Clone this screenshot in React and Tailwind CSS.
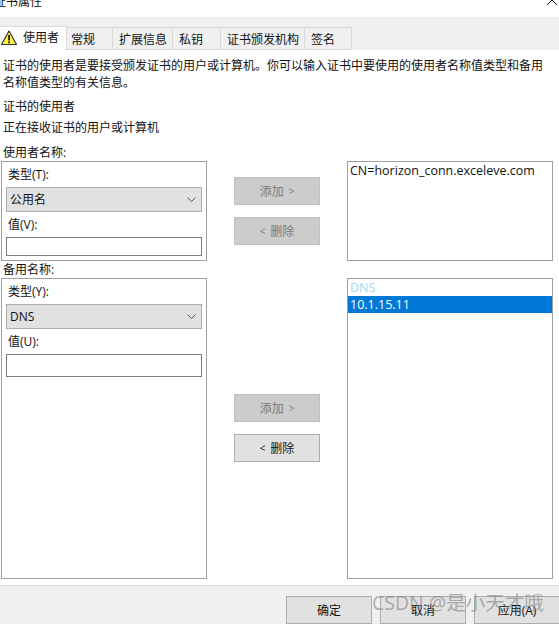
import React from "react";

function Chevron() {
  return (
    <svg width="9" height="5" viewBox="0 0 9 5" className="shrink-0">
      <path d="M0.5 0.5 L4.5 4.5 L8.5 0.5" fill="none" stroke="#555" strokeWidth="1" />
    </svg>
  );
}

function Warning() {
  return (
    <svg width="16" height="15" viewBox="0 0 16 15" className="shrink-0">
      <path d="M8 1 L15.5 14.5 H0.5 Z" fill="#fdf04a" stroke="#333" strokeWidth="1.2" strokeLinejoin="round" />
      <rect x="7.2" y="5" width="1.7" height="5.5" fill="#111" />
      <rect x="7.2" y="11.5" width="1.7" height="1.7" fill="#111" />
    </svg>
  );
}

function Tab({ w, pl, children }) {
  return (
    <div className={`${w} ${pl} h-[22px] flex items-center pt-[1px] border-t border-r border-[#d9d9d9] bg-[#f0f0f0] text-[#111]`}>
      {children}
    </div>
  );
}

function Btn({ disabled, children }) {
  return (
    <div
      className={`w-[86px] h-[28px] shrink-0 flex items-center justify-center gap-[5px] border ${
        disabled ? "bg-[#cccccc] border-[#bfbfbf] text-[#7a7a7a]" : "bg-[#e1e1e1] border-[#adadad] text-[#111]"
      }`}
    >
      {children}
    </div>
  );
}

function Group({ h, typeLabel, selected, valueLabel, inputH }) {
  return (
    <div className={`w-[206px] ${h} shrink-0 border border-[#a0a0a0] px-[4px] bg-white`}>
      <div className="h-[25px] pl-[2px] flex items-center">{typeLabel}</div>
      <div className="h-[25px] bg-[#e1e1e1] border border-[#adadad] flex items-center justify-between pl-[3px] pr-[5px]">
        <span>{selected}</span>
        <Chevron />
      </div>
      <div className="h-[25px] pl-[2px] flex items-center">{valueLabel}</div>
      <div className={`${inputH} border border-[#7a7a7a] bg-white`} />
    </div>
  );
}

export default function App() {
  return (
    <div
      className="relative w-[559px] h-[624px] overflow-hidden flex flex-col bg-white text-[12px] leading-[17px] text-[#111]"
      style={{ fontFamily: '"Open Sans", "Noto Sans CJK SC", sans-serif' }}
    >
      {/* title bar */}
      <div className="h-[17px] shrink-0 bg-white flex justify-between overflow-hidden">
        <div className="-mt-[7px] -ml-[6px] text-[12px] leading-[17px]">证书属性</div>
        <svg width="12" height="12" viewBox="0 0 12 12" className="-mt-[6px] mr-[1px]">
          <path d="M1 1 L11 11 M11 1 L1 11" stroke="#111" strokeWidth="1" fill="none" />
        </svg>
      </div>

      {/* tabs */}
      <div className="h-[33px] shrink-0 bg-[#f0f0f0] flex items-end">
        <div className="w-[67px] h-[24px] flex items-center gap-[6px] pl-[1px] pb-[2px] bg-white border-t border-r border-[#d9d9d9]">
          <Warning />
          <span>使用者</span>
        </div>
        <div className="flex items-end border-b border-[#d9d9d9]">
          <Tab w="w-[46px]" pl="pl-[4px]">常规</Tab>
          <Tab w="w-[60px]" pl="pl-[6px]">扩展信息</Tab>
          <Tab w="w-[48px]" pl="pl-[6px]">私钥</Tab>
          <Tab w="w-[84px]" pl="pl-[6px]">证书颁发机构</Tab>
          <Tab w="w-[47px]" pl="pl-[6px]">签名</Tab>
        </div>
      </div>

      {/* body */}
      <div className="flex-1 min-h-0 bg-white flex flex-col pl-[1px] pt-[7px]">
        <div className="pl-[2px] w-[556px]">
          <p className="whitespace-nowrap">证书的使用者是要接受颁发证书的用户或计算机。你可以输入证书中要使用的使用者名称值类型和备用</p>
          <p className="whitespace-nowrap">名称值类型的有关信息。</p>
          <p className="mt-[7px] leading-[17px]">证书的使用者</p>
          <p className="mt-[4px]">正在接收证书的用户或计算机</p>
          <p className="mt-[8px] h-[17px]">使用者名称:</p>
        </div>

        <div className="flex h-[100px]">
          <Group h="h-[100px]" typeLabel="类型(T):" selected="公用名" valueLabel="值(V):" inputH="h-[19px]" />
          <div className="ml-[27px] w-[86px] pt-[16px] flex flex-col gap-[12px]">
            <Btn disabled><span>添加</span><span className="text-[10px]">&gt;</span></Btn>
            <Btn disabled><span className="text-[10px]">&lt;</span><span>删除</span></Btn>
          </div>
          <div className="ml-[27px] w-[206px] border border-[#a0a0a0] px-[2px] text-[12.5px] leading-[17px] whitespace-nowrap">
            CN=horizon_conn.exceleve.com
          </div>
        </div>

        <p className="pl-[2px] h-[17px]">备用名称:</p>

        <div className="flex h-[301px]">
          <Group h="h-[301px]" typeLabel="类型(Y):" selected="DNS" valueLabel="值(U):" inputH="h-[23px]" />
          <div className="ml-[27px] w-[86px] pt-[116px] flex flex-col gap-[12px]">
            <Btn disabled><span>添加</span><span className="text-[10px]">&gt;</span></Btn>
            <Btn><span className="text-[10px]">&lt;</span><span>删除</span></Btn>
          </div>
          <div className="ml-[27px] w-[206px] border border-[#a0a0a0] text-[12.5px] leading-[17px] whitespace-nowrap">
            <div className="h-[17px] px-[2px] text-[#a6d8f0]">DNS</div>
            <div className="h-[17px] px-[2px] bg-[#0078d7] text-white">10.1.15.11</div>
          </div>
        </div>
      </div>

      {/* footer */}
      <div className="h-[39px] shrink-0 bg-[#f0f0f0] border-t border-[#dfdfdf] flex pt-[10px] pl-[286px] gap-[8px]">
        <Btn>确定</Btn>
        <Btn>取消</Btn>
        <Btn>应用(A)</Btn>
      </div>

      {/* watermark */}
      <div className="absolute left-[372px] top-[591px] text-[19.5px] leading-[24px] text-[#808080]/60 whitespace-nowrap">
        CSDN @是小天才哦
      </div>
    </div>
  );
}
